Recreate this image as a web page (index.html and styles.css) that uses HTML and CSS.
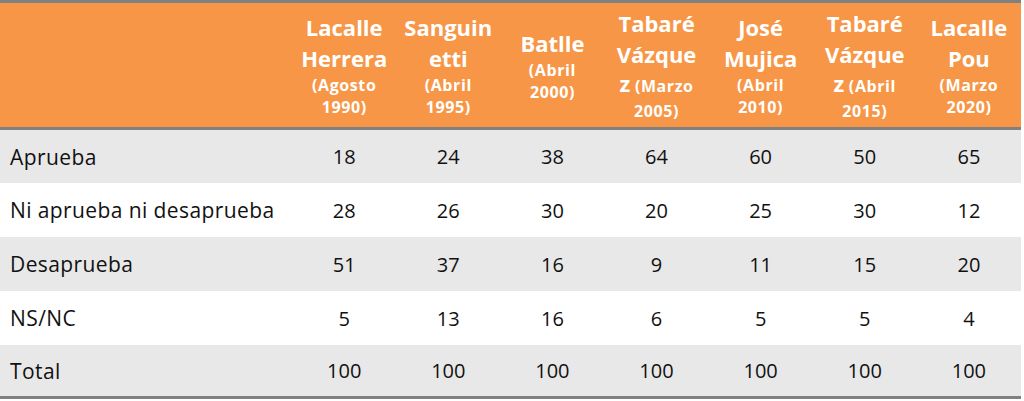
FILE: index.html
```html
<!DOCTYPE html>
<html lang="es">
<head>
<meta charset="utf-8">
<title>Aprobación presidencial</title>
<link rel="stylesheet" href="styles.css">
</head>
<body>
<table class="tbl">
  <colgroup>
    <col class="c-label">
    <col class="c-num"><col class="c-num"><col class="c-num"><col class="c-num"><col class="c-num"><col class="c-num"><col class="c-num">
  </colgroup>
  <thead>
    <tr>
      <th></th>
      <th><div class="big">Lacalle</div><div class="big">Herrera</div><div class="sm">(Agosto</div><div class="sm">1990)</div></th>
      <th><div class="big">Sanguin</div><div class="big">etti</div><div class="sm">(Abril</div><div class="sm">1995)</div></th>
      <th><div class="big">Batlle</div><div class="sm">(Abril</div><div class="sm">2000)</div></th>
      <th><div class="big">Tabaré</div><div class="big">Vázque</div><div class="sm mix"><span class="bz">z</span> (Marzo</div><div class="sm">2005)</div></th>
      <th><div class="big">José</div><div class="big">Mujica</div><div class="sm">(Abril</div><div class="sm">2010)</div></th>
      <th><div class="big">Tabaré</div><div class="big">Vázque</div><div class="sm mix"><span class="bz">z</span> (Abril</div><div class="sm">2015)</div></th>
      <th><div class="big">Lacalle</div><div class="big">Pou</div><div class="sm">(Marzo</div><div class="sm">2020)</div></th>
    </tr>
  </thead>
  <tbody>
    <tr class="odd r1"><td>Aprueba</td><td>18</td><td>24</td><td>38</td><td>64</td><td>60</td><td>50</td><td>65</td></tr>
    <tr class="even"><td>Ni aprueba ni desaprueba</td><td>28</td><td>26</td><td>30</td><td>20</td><td>25</td><td>30</td><td>12</td></tr>
    <tr class="odd"><td>Desaprueba</td><td>51</td><td>37</td><td>16</td><td>9</td><td>11</td><td>15</td><td>20</td></tr>
    <tr class="even"><td>NS/NC</td><td>5</td><td>13</td><td>16</td><td>6</td><td>5</td><td>5</td><td>4</td></tr>
    <tr class="odd last"><td>Total</td><td>100</td><td>100</td><td>100</td><td>100</td><td>100</td><td>100</td><td>100</td></tr>
  </tbody>
</table>
</body>
</html>
```
FILE: styles.css
```css
html, body {
  margin: 0;
  padding: 0;
  background: #ffffff;
}
.tbl {
  border-collapse: collapse;
  table-layout: fixed;
  width: 1021px;
  font-family: "Open Sans", "DejaVu Sans", sans-serif;
  color: #111111;
  border-top: 3px solid #808080;
  border-bottom: 3px solid #808080;
}
.c-label { width: 289px; }
.c-num { width: 103px; }
.tbl thead tr {
  background: #f79646;
  height: 127px;
}
.tbl th {
  color: #ffffff;
  font-weight: 700;
  text-align: center;
  vertical-align: middle;
  padding: 0;
  border-bottom: 3px solid #808080;
}
.big {
  font-size: 22px;
  line-height: 31px;
}
.sm {
  font-size: 16px;
  letter-spacing: 0.6px;
  line-height: 22px;
}
.sm.mix {
  line-height: 27px;
}
.bz {
  font-size: 22px;
  letter-spacing: 0;
}
.tbl td {
  font-size: 20px;
  height: 54px;
  padding: 0;
  text-align: center;
  vertical-align: middle;
}
.tbl td:first-child {
  text-align: left;
  padding-left: 10px;
  font-size: 21px;
  letter-spacing: 0.4px;
}
.tbl tr.r1 td { height: 53px; }
.tbl tr.last td { height: 51px; }
.odd { background: #e8e8e8; }
.even { background: #ffffff; }
```
